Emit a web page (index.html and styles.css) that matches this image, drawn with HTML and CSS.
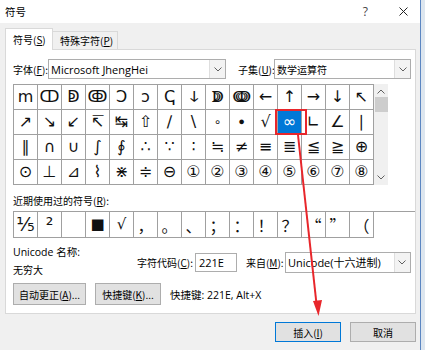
FILE: index.html
```html
<!DOCTYPE html>
<html lang="zh-CN">
<head>
  <meta charset="UTF-8" />
  <title>符号</title>
  <link rel="stylesheet" href="styles.css">
</head>
<body>
  <div class="window">
    <div class="titlebar">
      <span class="title">符号</span>
      <span class="help">?</span>
      <svg class="close" width="9" height="9" viewBox="0 0 9 9"><path d="M0.5 0.5L8.5 8.5M8.5 0.5L0.5 8.5" stroke="#222" stroke-width="1"/></svg>
    </div>

    <div class="tabs">
      <div class="tab active">符号(<u>S</u>)</div>
      <div class="tab">特殊字符(<u>P</u>)</div>
    </div>

    <div class="panel">
      <div class="font-row">
        <span class="label font-label">字体(<u>F</u>):</span>
        <div class="select font-select">
          <span class="value">Microsoft JhengHei</span>
          <span class="arrow"><svg width="8" height="5" viewBox="0 0 8 5"><path d="M0.5 0.5L4 4L7.5 0.5" fill="none" stroke="#606060"/></svg></span>
        </div>
        <span class="label subset-label">子集(<u>U</u>):</span>
        <div class="select subset-select">
          <span class="value">数学运算符</span>
          <span class="arrow"><svg width="8" height="5" viewBox="0 0 8 5"><path d="M0.5 0.5L4 4L7.5 0.5" fill="none" stroke="#606060"/></svg></span>
        </div>
      </div>

      <div class="symbols">
        <div class="grid">
          <div class="cell">ⅿ</div><div class="cell">ↀ</div><div class="cell">ↁ</div><div class="cell">ↂ</div><div class="cell">Ↄ</div>
          <div class="cell">ↄ</div><div class="cell">ↅ</div><div class="cell">ↆ</div><div class="cell">ↇ</div><div class="cell">ↈ</div>
          <div class="cell">←</div><div class="cell">↑</div><div class="cell">→</div><div class="cell">↓</div><div class="cell">↖</div>

          <div class="cell">↗</div><div class="cell">↘</div><div class="cell">↙</div><div class="cell">↸</div><div class="cell">↹</div>
          <div class="cell">⇧</div><div class="cell">∕</div><div class="cell">\</div><div class="cell small">∘</div><div class="cell">∙</div>
          <div class="cell">√</div><div class="cell selected">∞</div><div class="cell">∟</div><div class="cell">∠</div><div class="cell">∣</div>

          <div class="cell">∥</div><div class="cell">∩</div><div class="cell">∪</div><div class="cell">∫</div><div class="cell">∮</div>
          <div class="cell">∴</div><div class="cell">∵</div><div class="cell">∶</div><div class="cell">≒</div><div class="cell">≠</div>
          <div class="cell">≡</div><div class="cell">≣</div><div class="cell">≦</div><div class="cell">≧</div><div class="cell">⊕</div>

          <div class="cell">⊙</div><div class="cell">⊥</div><div class="cell">⊿</div><div class="cell">⌇</div><div class="cell">⋇</div>
          <div class="cell">≑</div><div class="cell">⊖</div><div class="cell">①</div><div class="cell">②</div><div class="cell">③</div>
          <div class="cell">④</div><div class="cell">⑤</div><div class="cell">⑥</div><div class="cell">⑦</div><div class="cell">⑧</div>
        </div>
        <div class="scrollbar">
          <svg class="sb-arrow" width="8" height="5" viewBox="0 0 8 5"><path d="M0.5 4.5L4 1L7.5 4.5" fill="none" stroke="#606060"/></svg>
          <div class="thumb"></div>
          <svg class="sb-arrow down" width="8" height="5" viewBox="0 0 8 5"><path d="M0.5 0.5L4 4L7.5 0.5" fill="none" stroke="#606060"/></svg>
        </div>
      </div>

      <div class="recent-label">近期使用过的符号(<u>R</u>):</div>
      <div class="grid recent">
        <div class="cell frac">⅕</div><div class="cell sup">²</div><div class="cell"></div><div class="cell">■</div><div class="cell">√</div>
        <div class="cell cjk">，</div><div class="cell cjk">。</div><div class="cell cjk">、</div><div class="cell cjk">；</div><div class="cell cjk">：</div>
        <div class="cell cjk">！</div><div class="cell cjk">？</div><div class="cell cjk">“</div><div class="cell cjk">”</div><div class="cell cjk">（</div>
      </div>

      <div class="info">
        <div class="name-col">
          <div>Unicode 名称:</div>
          <div class="cn">无穷大</div>
        </div>
        <div class="code-group">
          <span class="label">字符代码(<u>C</u>):</span>
          <div class="input">221E</div>
          <span class="label from-label">来自(<u>M</u>):</span>
          <div class="select from-select">
            <span class="value">Unicode(十六进制)</span>
            <span class="arrow"><svg width="8" height="5" viewBox="0 0 8 5"><path d="M0.5 0.5L4 4L7.5 0.5" fill="none" stroke="#606060"/></svg></span>
          </div>
        </div>
      </div>

      <div class="actions">
        <button class="button autocorrect">自动更正(<u>A</u>)...</button>
        <button class="button shortcut">快捷键(<u>K</u>)...</button>
        <span class="shortcut-text">快捷键: 221E, Alt+X</span>
      </div>
    </div>

    <div class="footer">
      <button class="button default">插入(<u>I</u>)</button>
      <button class="button">取消</button>
    </div>
  </div>

  <!-- red annotation drawn over the dialog -->
  <svg class="annotation" width="425" height="350" viewBox="0 0 425 350">
    <rect x="276" y="110" width="30" height="24" fill="none" stroke="#e8262b" stroke-width="2"/>
    <path d="M298 135L316.5 304" stroke="#e8262b" stroke-width="2" fill="none"/>
    <path d="M313 301L322 300L318.5 316Z" fill="#e8262b"/>
  </svg>
</body>
</html>
```

FILE: styles.css
```css
* {
  box-sizing: border-box;
}

body {
  margin: 0;
  width: 425px;
  height: 350px;
  overflow: hidden;
  position: relative;
  background-color: #dde6ef;
  font-family: "Open Sans", "Noto Sans CJK SC", sans-serif;
  font-size: 10.5px;
  color: #000;
}

u {
  text-decoration: underline;
}

.window {
  width: 421px;
  height: 350px;
  background-color: #f0f0f0;
  border-right: 1px solid #5b86c2;
}

.titlebar {
  height: 23px;
  background-color: #fff;
  display: flex;
  align-items: center;
  padding-left: 5px;
}

.title {
  font-family: "Noto Sans CJK SC", sans-serif;
  font-size: 10.5px;
}

.help {
  margin-left: auto;
  margin-right: 31px;
  color: #444;
  font-size: 12px;
}

.close {
  margin-right: 12px;
}

/* tabs */
.tabs {
  display: flex;
  align-items: flex-end;
  height: 21px;
  margin-top: 5px;
  padding-left: 5px;
}

.tab {
  width: 65px;
  height: 18px;
  padding-left: 7px;
  display: flex;
  align-items: center;
  border: 1px solid #d9d9d9;
  border-bottom: none;
  border-left: none;
  background-color: #f0f0f0;
  font-family: "Noto Sans CJK SC", sans-serif;
  font-size: 10px;
}

.tab.active {
  height: 22px;
  width: 48px;
  margin-bottom: -1px;
  background-color: #fff;
  border-left: 1px solid #d9d9d9;
  position: relative;
  z-index: 1;
}

.panel {
  margin-left: 5px;
  width: 411px;
  height: 265px;
  background-color: #fff;
  border: 1px solid #d9d9d9;
  padding: 9px 0 0 7px;
}

.font-row {
  display: flex;
  align-items: center;
  height: 20px;
}

.label {
  font-family: "Noto Sans CJK SC", sans-serif;
  font-size: 10px;
  white-space: nowrap;
}

.font-label {
  width: 35px;
}

.subset-label {
  margin-left: 12px;
  width: 36px;
}

.select {
  height: 20px;
  display: flex;
  align-items: center;
  border: 1px solid #adadad;
  background-color: #fff;
}

.select .value {
  flex: 1;
  padding-left: 2px;
  white-space: nowrap;
  font-size: 11px;
}

.select .arrow {
  width: 16px;
  height: 100%;
  display: flex;
  align-items: center;
  justify-content: center;
  background-color: #f3f3f3;
  border-left: 1px solid #dedede;
}

.font-select {
  width: 178px;
}

.subset-select {
  width: 137px;
}

.subset-select .value {
  font-family: "Noto Sans CJK SC", sans-serif;
  font-size: 10px;
}

/* symbol table */
.symbols {
  display: flex;
  margin-top: 5px;
}

.grid {
  display: grid;
  grid-template-columns: repeat(15, 24px);
  grid-auto-rows: 25px;
  border-left: 1px solid #a0a0a0;
  border-top: 1px solid #a0a0a0;
}

.cell {
  border-right: 1px solid #a0a0a0;
  border-bottom: 1px solid #a0a0a0;
  display: flex;
  align-items: center;
  justify-content: center;
  font-family: "DejaVu Sans", "Noto Sans CJK SC", sans-serif;
  font-size: 16px;
  line-height: 1;
  color: #111;
}

.cell.small {
  font-size: 12px;
}

.cell.selected {
  background-color: #0078d7;
  color: #fff;
}

.scrollbar {
  width: 14px;
  height: 101px;
  background-color: #f0f0f0;
  display: flex;
  flex-direction: column;
  align-items: center;
  padding-top: 5px;
}

.thumb {
  width: 13px;
  height: 15px;
  margin-top: 3px;
  background-color: #cdcdcd;
}

.sb-arrow.down {
  margin-top: auto;
  margin-bottom: 5px;
}

.recent-label {
  margin-top: 8px;
  line-height: 16px;
  font-family: "Noto Sans CJK SC", sans-serif;
  font-size: 10px;
}

.recent {
  margin-top: 2px;
  grid-auto-rows: 26px;
}

.recent .cell {
  font-size: 15px;
}

.recent .frac {
  font-size: 19px;
}

.recent .sup {
  align-items: flex-start;
  padding-top: 3px;
  font-size: 19px;
}

.recent .cjk {
  font-family: "Noto Sans CJK SC", sans-serif;
  font-size: 16px;
}

/* name / code */
.info {
  display: flex;
  margin-top: 5px;
}

.name-col {
  width: 124px;
  line-height: 18px;
}

.name-col .cn {
  font-family: "Noto Sans CJK SC", sans-serif;
  font-size: 10px;
}

.code-group {
  display: flex;
  align-items: center;
  margin-top: 9px;
  height: 20px;
}

.input {
  width: 42px;
  height: 19px;
  margin-left: 2px;
  padding-left: 3px;
  border: 1px solid #adadad;
  display: flex;
  align-items: center;
  font-size: 11px;
}

.from-label {
  margin-left: 9px;
  width: 39px;
}

.from-select {
  width: 126px;
  height: 21px;
}

.actions {
  display: flex;
  align-items: center;
  margin-top: 4px;
}

.button {
  height: 22px;
  padding: 0;
  background-color: #e1e1e1;
  border: 1px solid #adadad;
  font-family: "Noto Sans CJK SC", sans-serif;
  font-size: 10px;
  color: #000;
}

.autocorrect {
  width: 73px;
}

.shortcut {
  width: 66px;
  margin-left: 9px;
}

.shortcut-text {
  margin-left: 9px;
}

.footer {
  display: flex;
  justify-content: flex-end;
  gap: 9px;
  margin-top: 8px;
  padding-right: 4px;
}

.footer .button {
  width: 66px;
  height: 20px;
}

.footer .default {
  border-color: #0078d7;
}

.annotation {
  position: absolute;
  top: 0;
  left: 0;
  pointer-events: none;
}
```
